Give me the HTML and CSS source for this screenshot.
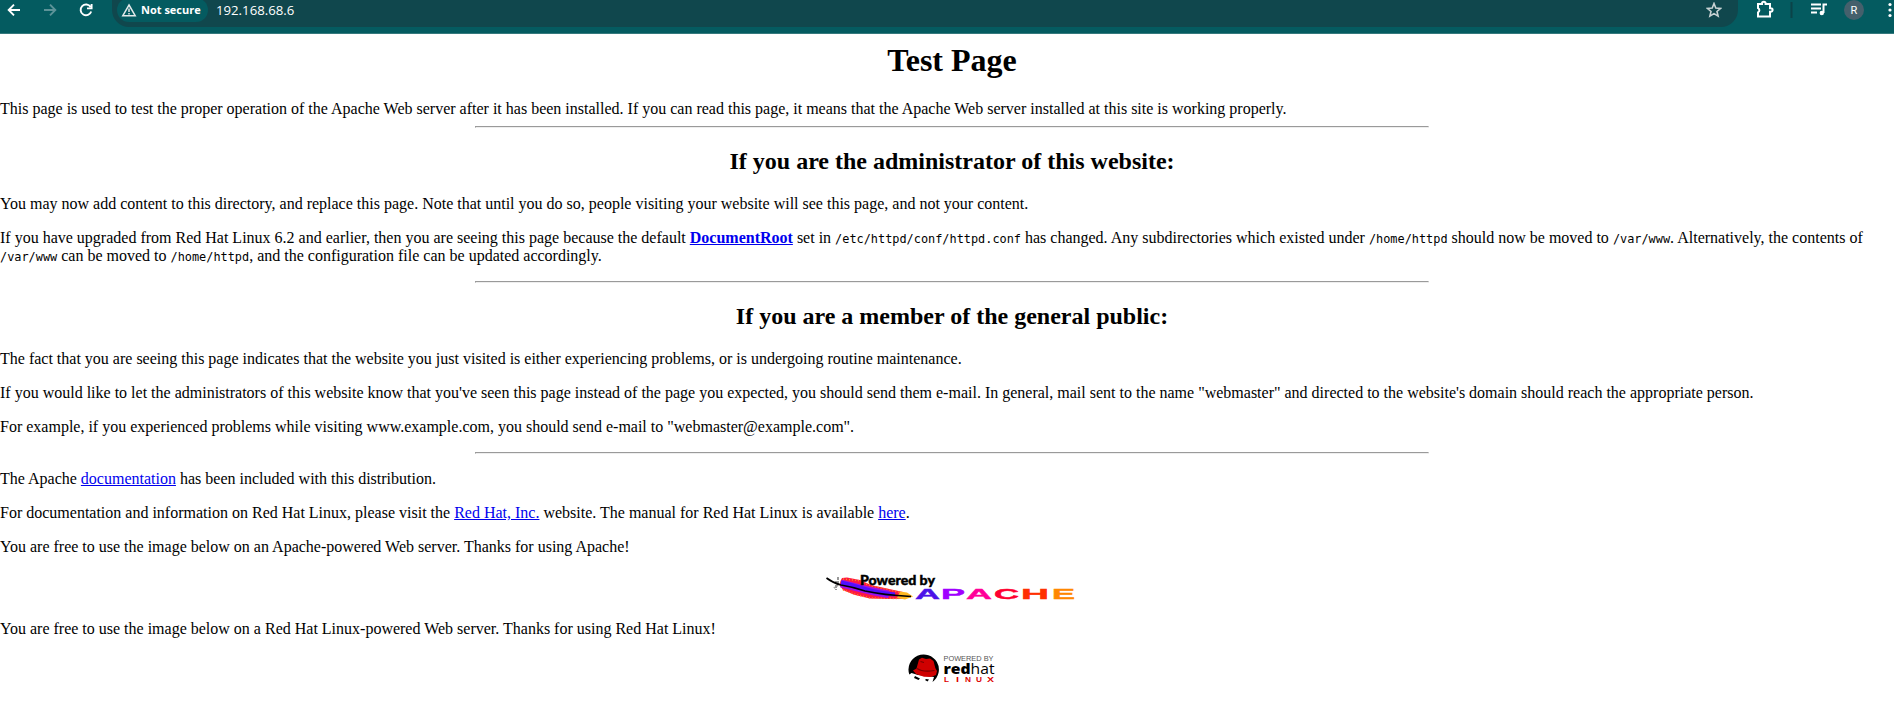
FILE: index.html
```html
<!DOCTYPE html>
<html lang="en">
<head>
<meta charset="utf-8">
<title>Test Page for Apache Installation</title>
<link rel="stylesheet" href="styles.css">
</head>
<body>
<header class="toolbar">
  <svg class="nav" width="94" height="34" viewBox="0 0 94 34" fill="none" stroke="#fff" stroke-width="1.9">
    <path d="M20 10H9M14 4.700L8.700 10L14 15.300"/>
    <path stroke="#5d9398" d="M44 10H55M50 4.700L55.300 10L50 15.300"/>
    <path d="M90.600 7A5.400 5.400 0 1 0 91.200 11.500M91.600 4V8.400H87"/>
  </svg>
  <div class="omnibox">
    <span class="chip">
      <svg width="16" height="14" viewBox="0 0 16 14" fill="none" stroke="#e3e9ea" stroke-width="1.5"><path d="M8 2L14.200 12.700H1.800Z"/><path d="M8 5.500V9M8 10V11.500"/></svg>
      Not secure
    </span>
    <span class="address">192.168.68.6</span>
    <svg class="star" width="16" height="16" viewBox="0 0 16 16" fill="none" stroke="#c8d2d3" stroke-width="1.6"><path d="M8 1.500L9.800 6L14.600 6.400L11 9.500L12.100 14.100L8 11.600L3.900 14.100L5 9.500L1.400 6.400L6.200 6Z"/></svg>
  </div>
  <svg class="tools" width="156" height="34" viewBox="0 0 156 34" fill="none" stroke="#fff" stroke-width="2">
    <path d="M20 4H24V3.500A1.800 1.800 0 0 1 27.600 3.500V4H32V8.200H32.800A1.800 1.800 0 0 1 32.800 11.800H32V16.500H20V12.300A2.300 2.300 0 0 0 20 8.100Z"/>
    <path stroke="#0b4348" d="M53.500 2V18"/>
    <path d="M73 4.500H83M73 8.500H83M73 12.500H79M85.500 13V4.500H89"/>
    <circle cx="83.800" cy="13" r="2.200" fill="#fff" stroke="none"/>
    <circle cx="116" cy="10" r="10" fill="#45606c" stroke="none"/>
    <text class="avatar" x="116" y="14" text-anchor="middle">R</text>
    <g fill="#fff" stroke="none"><circle cx="152" cy="4.500" r="1.600"/><circle cx="152" cy="10" r="1.600"/><circle cx="152" cy="15.500" r="1.600"/></g>
  </svg>
</header>
<main class="page">
<h1>Test Page</h1>
<div>This page is used to test the proper operation of the Apache Web server after it has been installed. If you can read this page, it means that the Apache Web server installed at this site is working properly.</div>
<hr>
<h2>If you are the administrator of this website:</h2>
<p>You may now add content to this directory, and replace this page. Note that until you do so, people visiting your website will see this page, and not your content.</p>
<p>If you have upgraded from Red Hat Linux 6.2 and earlier, then you are seeing this page because the default <a href="#"><b>DocumentRoot</b></a> set in <code>/etc/httpd/conf/httpd.conf</code> has changed. Any subdirectories which existed under <code>/home/httpd</code> should now be moved to <code>/var/www</code>. Alternatively, the contents of <code>/var/www</code> can be moved to <code>/home/httpd</code>, and the configuration file can be updated accordingly.</p>
<hr>
<h2>If you are a member of the general public:</h2>
<p>The fact that you are seeing this page indicates that the website you just visited is either experiencing problems, or is undergoing routine maintenance.</p>
<p>If you would like to let the administrators of this website know that you've seen this page instead of the page you expected, you should send them e-mail. In general, mail sent to the name "webmaster" and directed to the website's domain should reach the appropriate person.</p>
<p>For example, if you experienced problems while visiting www.example.com, you should send e-mail to "webmaster@example.com".</p>
<hr>
<p>The Apache <a href="#">documentation</a> has been included with this distribution.</p>
<p>For documentation and information on Red Hat Linux, please visit the <a href="#">Red Hat, Inc.</a> website. The manual for Red Hat Linux is available <a href="#">here</a>.</p>
<p>You are free to use the image below on an Apache-powered Web server. Thanks for using Apache!</p>
<svg class="badge" width="259" height="32" viewBox="0 0 259 32">
  <path fill="none" stroke="#999" stroke-width="2" stroke-dasharray="3 1" d="M15 5V13L11 16M13 9V18"/>
  <path fill="#ff1840" d="M17.500 9L19 6L24 5.500L37 8L48 13L64 16.500L80 20L80 26.700L64 27L47 26.500L31 22.700L20 18L16.500 13Z"/>
  <path fill="none" stroke="#ff8a20" stroke-width="1.500" stroke-dasharray="1 2" d="M20 7L35 8.500L48 14L64 17.500L78 20.500M20 18L31 22L47 26L76 26.500"/>
  <path fill="none" stroke="#a010e8" stroke-width="7.500" d="M18 11.500Q30 14.500 40 17T66 22.500"/>
  <path fill="none" stroke="#5010ff" stroke-width="4" d="M18 10.500Q30 13 42 17T72 22.500"/>
  <path fill="#ffb820" d="M77 19.500L84 20.500L90 24.500L82 27.500L74 26Z"/>
  <path fill="none" stroke="#000" stroke-width="1.600" d="M3.500 6Q10 11 18 13Q30 15 42 19Q60 23 88 24.500"/>
  <text class="powered" x="37" y="13" textLength="75" lengthAdjust="spacingAndGlyphs">Powered by</text>
  <g class="apache">
    <text x="92" y="27" textLength="25" lengthAdjust="spacingAndGlyphs" fill="#4b12e8" stroke="#4b12e8">A</text>
    <text x="118" y="27" textLength="24" lengthAdjust="spacingAndGlyphs" fill="#a000ff" stroke="#a000ff">P</text>
    <text x="143" y="27" textLength="26" lengthAdjust="spacingAndGlyphs" fill="#ff0098" stroke="#ff0098">A</text>
    <text x="171" y="27" textLength="25" lengthAdjust="spacingAndGlyphs" fill="#ff0030" stroke="#ff0030">C</text>
    <text x="198" y="27" textLength="28" lengthAdjust="spacingAndGlyphs" fill="#ff3000" stroke="#ff3000">H</text>
    <text x="229" y="27" textLength="23" lengthAdjust="spacingAndGlyphs" fill="#ff8800" stroke="#ff8800">E</text>
  </g>
</svg>
<p>You are free to use the image below on a Red Hat Linux-powered Web server. Thanks for using Red Hat Linux!</p>
<svg class="badge" width="88" height="31" viewBox="0 0 88 31">
  <path fill="#000" d="M1.300 20.500A15.200 15.200 0 1 1 24.500 28L26 23L10 21L3.500 19Z"/>
  <path fill="#000" d="M7 22L12 24.500L10.500 26L6 24ZM17 26L19.500 27.500L21 25.500L18 25Z"/>
  <path fill="#d00000" d="M5 16.500L8.500 14.500L11 5.500L14 3.700L18 5L22 4.500L25.500 7L27.300 14L29 17L28 21L23 23L16 22.700L8 20Z"/>
  <path fill="none" stroke="#700" stroke-width="1.200" d="M9 14.500Q15 18.500 26.500 16.500M12.500 7.500L16 8.500"/>
  <text class="tiny" x="35.500" y="7" textLength="50" lengthAdjust="spacingAndGlyphs">POWERED BY</text>
  <text class="redhat" x="35.500" y="20" textLength="51" lengthAdjust="spacingAndGlyphs"><tspan class="strong">red</tspan>hat</text>
  <g class="linux">
    <text x="36" y="28" textLength="5" lengthAdjust="spacingAndGlyphs">L</text>
    <text x="48" y="28" textLength="3" lengthAdjust="spacingAndGlyphs">I</text>
    <text x="57" y="28" textLength="6" lengthAdjust="spacingAndGlyphs">N</text>
    <text x="68" y="28" textLength="6" lengthAdjust="spacingAndGlyphs">U</text>
    <text x="79" y="28" textLength="7" lengthAdjust="spacingAndGlyphs">X</text>
  </g>
</svg>
</main>
</body>
</html>
```
FILE: styles.css
```css
html {
  overflow: hidden;
  background: #fff;
}
body {
  margin: 0;
  font: 16px/18px "Liberation Serif", "Times New Roman", serif;
  color: #000;
}
.toolbar {
  display: flex;
  box-sizing: border-box;
  height: 34px;
  background: #045b60;
  border-bottom: 1px solid #35797d;
}
.omnibox {
  display: flex;
  align-items: center;
  box-sizing: border-box;
  width: 1626px;
  height: 27px;
  margin-left: 18px;
  padding: 0 16px 7px 5px;
  background: #10474d;
  border-radius: 0 0 17px 17px;
  font-family: "Open Sans", "Noto Sans", sans-serif;
  color: #fff;
}
.chip {
  display: flex;
  align-items: center;
  gap: 4px;
  box-sizing: border-box;
  width: 91px;
  height: 24px;
  padding-left: 4px;
  background: #045b60;
  border-radius: 12px;
  font-size: 11px;
  font-weight: 700;
  white-space: nowrap;
}
.address {
  margin-left: 8px;
  font-size: 13.2px;
}
.star {
  margin-left: auto;
}
.avatar {
  font: 11px Roboto, sans-serif;
  fill: #fff;
  stroke: none;
}
.page {
  width: 1904px;
  padding-top: 8px;
}
h1 {
  margin: 0 0 21px;
  font-size: 32px;
  line-height: 37px;
  text-align: center;
}
h2 {
  margin: 20px 0;
  font-size: 24px;
  line-height: 27px;
  text-align: center;
}
p {
  margin: 16px 0;
}
hr {
  box-sizing: border-box;
  width: 954px;
  height: 2px;
  margin: 8px auto;
  border: 1px solid;
  border-color: #9a9a9a #eee #eee #9a9a9a;
}
a {
  color: #0000ee;
}
code {
  font: 11.88px/1 "DejaVu Sans Mono", monospace;
}
.badge {
  display: block;
  margin: 0 auto;
}
.powered {
  font: 900 12.5px Lato, sans-serif;
  stroke: #000;
  stroke-width: 0.4px;
}
.apache {
  font: bold 15px "Liberation Sans", Arial, sans-serif;
  stroke-width: 0.4px;
}
.tiny {
  font: 6.5px "Liberation Sans", sans-serif;
  fill: #555;
}
.redhat {
  font: 14px "Open Sans", sans-serif;
}
.strong {
  font-weight: 800;
}
.linux {
  font: bold 6.5px "Liberation Sans", sans-serif;
  fill: #d00;
}
```
